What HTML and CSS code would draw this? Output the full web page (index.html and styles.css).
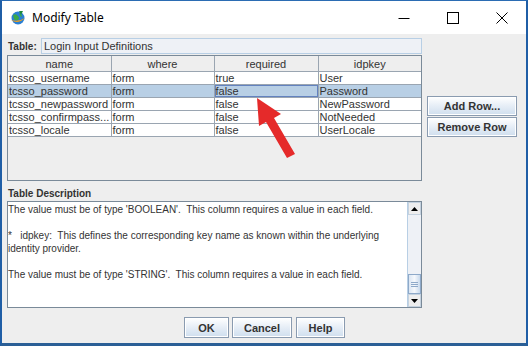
FILE: index.html
```html
<!DOCTYPE html>
<html>
<head>
<meta charset="utf-8">
<link rel="stylesheet" href="styles.css">
</head>
<body>
<div class="window">
  <div class="titlebar">
    <svg class="app-icon" width="16" height="16" viewBox="0 0 16 16">
      <circle cx="8" cy="8" r="6.5" fill="#2a7fd4"/>
      <path d="M3 5 Q6 3 8 6 Q10 8 8 10 Q5 11 4 9 Z" fill="#3aa84a"/>
      <path d="M9 3 Q12 4 12 7 L10 6 Z" fill="#3aa84a"/>
      <path d="M1 10 Q8 15 15 8 Q9 12 1 10 Z" fill="#f2a11c"/>
      <path d="M9 1 L13 1 L11 5 Z" fill="#1d8a3c"/>
    </svg>
    <span class="title">Modify Table</span>
    <div class="controls">
      <span class="ctl"><svg width="12" height="12" viewBox="0 0 12 12"><path d="M0.5 6.5 H11.5" stroke="#000" stroke-width="1"/></svg></span>
      <span class="ctl"><svg width="12" height="12" viewBox="0 0 12 12"><rect x="0.5" y="0.5" width="11" height="11" fill="none" stroke="#000" stroke-width="1"/></svg></span>
      <span class="ctl"><svg width="12" height="12" viewBox="0 0 12 12"><path d="M0.5 0.5 L11.5 11.5 M11.5 0.5 L0.5 11.5" stroke="#000" stroke-width="1"/></svg></span>
    </div>
  </div>
  <div class="content">
    <div class="main">
      <div class="left">
        <div class="name-row">
          <span class="lbl">Table:</span>
          <div class="field">Login Input Definitions</div>
        </div>
        <div class="table-pane">
          <table class="grid">
            <colgroup><col class="c1"><col class="c2"><col class="c3"><col class="c4"></colgroup>
            <thead>
              <tr><th>name</th><th>where</th><th>required</th><th>idpkey</th></tr>
            </thead>
            <tbody>
              <tr><td>tcsso_username</td><td>form</td><td>true</td><td>User</td></tr>
              <tr class="sel"><td>tcsso_password</td><td>form</td><td class="focus">false</td><td>Password</td></tr>
              <tr><td>tcsso_newpassword</td><td>form</td><td>false</td><td>NewPassword</td></tr>
              <tr><td>tcsso_confirmpass...</td><td>form</td><td>false</td><td>NotNeeded</td></tr>
              <tr><td>tcsso_locale</td><td>form</td><td>false</td><td>UserLocale</td></tr>
            </tbody>
          </table>
        </div>
      </div>
      <div class="side">
        <button class="btn side-btn">Add Row...</button>
        <button class="btn side-btn">Remove Row</button>
      </div>
    </div>
    <div class="desc-label">Table Description</div>
    <div class="textarea">
      <div class="text">The value must be of type 'BOOLEAN'.  This column requires a value in each field.

*   idpkey:  This defines the corresponding key name as known within the underlying
identity provider.

The value must be of type 'STRING'.  This column requires a value in each field.</div>
      <div class="scrollbar">
        <div class="sb-btn"><svg width="7" height="4" viewBox="0 0 7 4"><path d="M0 4 L3.5 0 L7 4 Z" fill="#000"/></svg></div>
        <div class="sb-track"></div>
        <div class="sb-thumb"><span></span><span></span><span></span></div>
        <div class="sb-btn"><svg width="7" height="4" viewBox="0 0 7 4"><path d="M0 0 L7 0 L3.5 4 Z" fill="#000"/></svg></div>
      </div>
    </div>
    <div class="buttons">
      <button class="btn b-ok">OK</button>
      <button class="btn b-cancel">Cancel</button>
      <button class="btn b-help">Help</button>
    </div>
  </div>
  <svg class="arrow" width="60" height="80" viewBox="240 90 60 80">
    <polygon points="257,98 259,126 266,122 287,158 295,154 274,118 281,114" fill="#e52a2a"/>
  </svg>
</div>
</body>
</html>
```

FILE: styles.css
```css
html, body {
  margin: 0;
  padding: 0;
  background: #ffffff;
}

.window {
  position: relative;
  width: 528px;
  height: 346px;
  box-sizing: border-box;
  border-top: 1px solid #2b6cb3;
  border-left: 2px solid #1f5ea6;
  border-right: 2px solid #1f5ea6;
  border-bottom: 3px solid #2b5f96;
  background: #eeeeee;
  font-family: "Liberation Sans", Arial, sans-serif;
  font-size: 11px;
  color: #000;
  display: flex;
  flex-direction: column;
}

.titlebar {
  height: 33px;
  background: #ffffff;
  display: flex;
  align-items: center;
  flex-shrink: 0;
}

.app-icon {
  margin-left: 8px;
  margin-right: 6px;
}

.title {
  font-family: "Noto Sans", "Liberation Sans", sans-serif;
  font-size: 12px;
  color: #000;
}

.controls {
  margin-left: auto;
  display: flex;
}

.ctl {
  width: 49px;
  height: 33px;
  display: flex;
  align-items: center;
  justify-content: center;
}

.content {
  padding: 4px 0 0 5px;
  display: flex;
  flex-direction: column;
}

.main {
  display: flex;
  gap: 5px;
}

.left {
  width: 415px;
  display: flex;
  flex-direction: column;
}

.name-row {
  display: flex;
  align-items: center;
  height: 16px;
}

.lbl {
  font-weight: bold;
  font-size: 10px;
  width: 33px;
  padding-left: 1px;
  color: #333;
}

.field {
  flex: 1;
  height: 16px;
  box-sizing: border-box;
  border: 1px solid #b8cfe5;
  background: #eef1f6;
  padding-left: 2px;
  line-height: 14px;
  color: #333;
}

.table-pane {
  margin-top: 1px;
  height: 126px;
  box-sizing: border-box;
  border: 1px solid #7a8a99;
  background: #eeeeee;
  overflow: hidden;
}

.grid {
  border-collapse: collapse;
  table-layout: fixed;
  width: 413px;
}

.c1 { width: 103px; }
.c2 { width: 103px; }
.c3 { width: 104px; }
.c4 { width: 103px; }

.grid th {
  height: 15px;
  padding: 0;
  font-weight: normal;
  text-align: center;
  background: #eeeeee;
  border-right: 1px solid #9aa5b1;
  border-bottom: 1px solid #9aa5b1;
  color: #333;
}

.grid th:last-child { border-right: none; }

.grid td {
  height: 12px;
  padding: 0 0 0 1px;
  line-height: 12px;
  background: #ffffff;
  border-right: 1px solid #9aa5b1;
  border-bottom: 1px solid #9aa5b1;
  white-space: nowrap;
  overflow: hidden;
  color: #333;
}

.grid td:last-child { border-right: none; }

.grid tr.sel td {
  background: #b8cfe5;
}

.grid td.focus {
  box-shadow: inset 0 0 0 1px #6382bf;
}

.side {
  width: 90px;
  padding-top: 58px;
  display: flex;
  flex-direction: column;
  gap: 1px;
}

.btn {
  font-family: "Liberation Sans", Arial, sans-serif;
  font-size: 11px;
  font-weight: bold;
  color: #333;
  border: 1px solid #8a9bb0;
  background: linear-gradient(#ffffff 0%, #e8eff7 45%, #cfdeee 100%);
  padding: 0;
  margin: 0;
  box-shadow: inset 0 0 0 1px #ffffff;
}

.side-btn {
  height: 20px;
  width: 90px;
}

.desc-label {
  margin-top: 6px;
  height: 14px;
  line-height: 14px;
  font-weight: bold;
  font-size: 10px;
  color: #333;
  padding-left: 1px;
}

.textarea {
  width: 415px;
  height: 107px;
  box-sizing: border-box;
  border: 1px solid #7a8a99;
  background: #ffffff;
  display: flex;
}

.text {
  flex: 1;
  white-space: pre;
  font-size: 10px;
  line-height: 13px;
  padding: 1px 0 0 0;
  overflow: hidden;
  color: #333;
}

.scrollbar {
  width: 13px;
  display: flex;
  flex-direction: column;
  border-left: 1px solid #b8cfe5;
  background: #eef1f6;
}

.sb-btn {
  height: 13px;
  box-sizing: border-box;
  display: flex;
  align-items: center;
  justify-content: center;
  background: #eeeeee;
  border: 1px solid #c5d2df;
}

.sb-track {
  flex: 1;
}

.sb-thumb {
  height: 20px;
  box-sizing: border-box;
  border: 1px solid #8ea9c9;
  background: linear-gradient(90deg, #dbe6f3, #f5f8fc 50%, #c9daed);
  display: flex;
  flex-direction: column;
  justify-content: center;
  align-items: center;
  gap: 1px;
}

.sb-thumb span {
  width: 7px;
  height: 1px;
  background: #8ea9c9;
}

.buttons {
  margin-top: 9px;
  display: flex;
  justify-content: center;
  gap: 3px;
  padding-right: 4px;
}

.buttons .btn { height: 21px; }
.b-ok { width: 45px; }
.b-cancel { width: 60px; margin-right: 1px; }
.b-help { width: 49px; }

.arrow {
  position: absolute;
  left: 238px;
  top: 89px;
}
```
